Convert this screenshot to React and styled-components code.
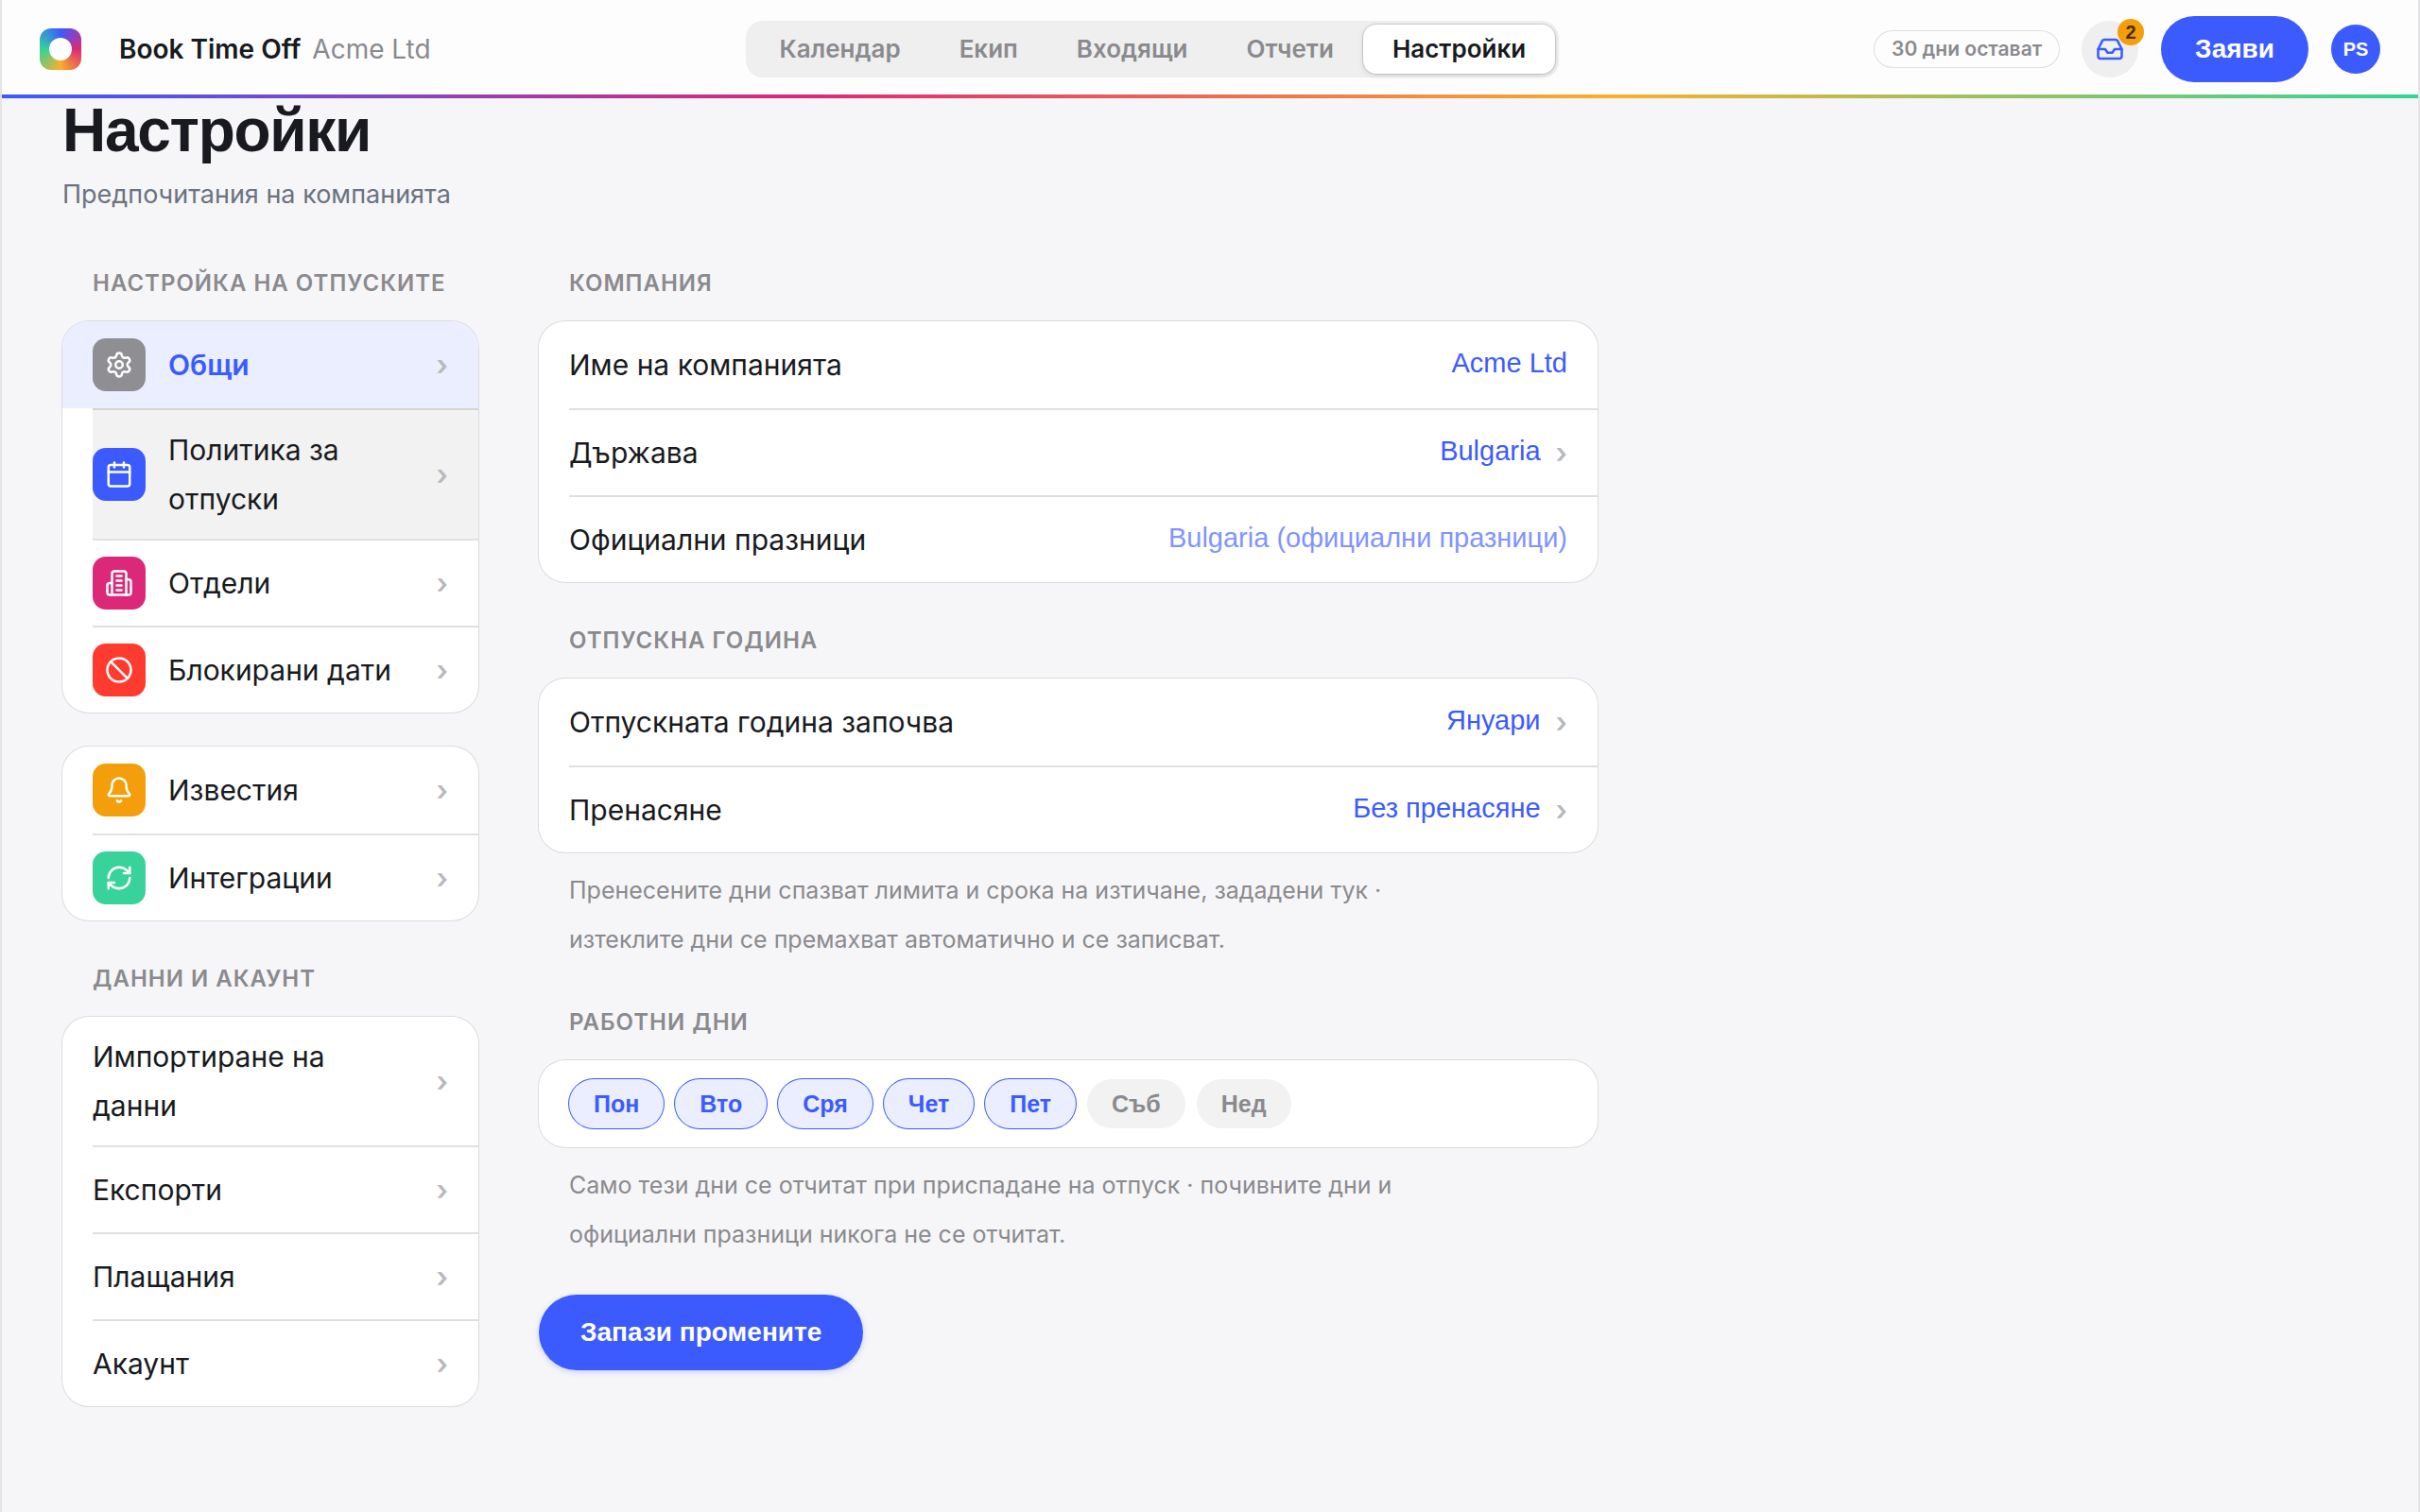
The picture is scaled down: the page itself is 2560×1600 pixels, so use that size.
import React, { useState } from "react";
import styled, { createGlobalStyle, css } from "styled-components";
import { Ban, Bell, Calendar, Inbox, RefreshCw, Settings } from "lucide-react";

const NAV_ITEMS = ["Календар", "Екип", "Входящи", "Отчети", "Настройки"];

const LEAVE_MENU = [
  { label: "Общи", icon: Settings, color: "#8e8e93", active: true },
  { label: "Политика за отпуски", icon: Calendar, color: "#3b5bff", hovered: true },
  { label: "Отдели", icon: BuildingIcon, color: "#dc2878" },
  { label: "Блокирани дати", icon: Ban, color: "#ff3b30" },
];

const APP_MENU = [
  { label: "Известия", icon: Bell, color: "#f59e0b" },
  { label: "Интеграции", icon: RefreshCw, color: "#38d39b" },
];

const DATA_MENU = [
  { label: "Импортиране на данни" },
  { label: "Експорти" },
  { label: "Плащания" },
  { label: "Акаунт" },
];

const WEEK = ["Пон", "Вто", "Сря", "Чет", "Пет", "Съб", "Нед"];

function BuildingIcon({ size = 24, strokeWidth = 2 }) {
  return (
    <svg
      width={size}
      height={size}
      viewBox="0 0 24 24"
      fill="none"
      stroke="currentColor"
      strokeWidth={strokeWidth}
      strokeLinecap="round"
      strokeLinejoin="round"
      aria-hidden="true"
    >
      <path d="M6 22V4a2 2 0 0 1 2-2h8a2 2 0 0 1 2 2v18Z" />
      <path d="M6 12H4a2 2 0 0 0-2 2v6a2 2 0 0 0 2 2h2" />
      <path d="M18 9h2a2 2 0 0 1 2 2v9a2 2 0 0 1-2 2h-2" />
      <path d="M10 6h4" />
      <path d="M10 10h4" />
      <path d="M10 14h4" />
      <path d="M10 18h4" />
    </svg>
  );
}

function Menu({ items }) {
  return (
    <Card>
      {items.map(({ label, icon: Icon, color, active, hovered }) => (
        <MenuLink href="#" key={label} $active={active} $hovered={hovered}>
          {Icon && (
            <IconTile $color={color}>
              <Icon size={30} strokeWidth={2} />
            </IconTile>
          )}
          <MenuLabel>{label}</MenuLabel>
          <Chevron>›</Chevron>
        </MenuLink>
      ))}
    </Card>
  );
}

function SelectRow({ id, label, options }) {
  return (
    <FieldRow>
      <FieldLabel htmlFor={id}>{label}</FieldLabel>
      <FieldSelect id={id}>
        {options.map((option) => (
          <option key={option}>{option}</option>
        ))}
      </FieldSelect>
      <Chevron>›</Chevron>
    </FieldRow>
  );
}

export default function App() {
  const [companyName, setCompanyName] = useState("Acme Ltd");
  const [workDays, setWorkDays] = useState(WEEK.slice(0, 5));

  const toggleDay = (day) => {
    setWorkDays((days) =>
      days.includes(day) ? days.filter((d) => d !== day) : [...days, day]
    );
  };

  return (
    <Shell>
      <GlobalStyle />
      <Header>
        <Brand href="#">
          <Logo />
          <BrandText>
            <BrandName>Book Time Off</BrandName>
            <BrandCompany>Acme Ltd</BrandCompany>
          </BrandText>
        </Brand>
        <Nav>
          {NAV_ITEMS.map((item) => (
            <NavLink href="#" key={item} $active={item === "Настройки"}>
              {item}
            </NavLink>
          ))}
        </Nav>
        <Actions>
          <Balance>30 дни остават</Balance>
          <InboxButton type="button" aria-label="Входящи">
            <Inbox size={30} strokeWidth={2} />
            <Badge>2</Badge>
          </InboxButton>
          <RequestButton type="button">Заяви</RequestButton>
          <Avatar type="button">PS</Avatar>
        </Actions>
      </Header>

      <Main>
        <Title>Настройки</Title>
        <Subtitle>Предпочитания на компанията</Subtitle>

        <Columns>
          <Sidebar>
            <SectionTitle>Настройка на отпуските</SectionTitle>
            <Menu items={LEAVE_MENU} />
            <MenuGap />
            <Menu items={APP_MENU} />
            <SectionTitle $spaced>Данни и акаунт</SectionTitle>
            <Menu items={DATA_MENU} />
          </Sidebar>

          <Form onSubmit={(e) => e.preventDefault()}>
            <SectionTitle>Компания</SectionTitle>
            <Card>
              <FieldRow>
                <FieldLabel htmlFor="company">Име на компанията</FieldLabel>
                <FieldInput
                  id="company"
                  value={companyName}
                  onChange={(e) => setCompanyName(e.target.value)}
                />
              </FieldRow>
              <SelectRow id="country" label="Държава" options={["Bulgaria"]} />
              <FieldRow>
                <FieldLabel htmlFor="holidays">Официални празници</FieldLabel>
                <FieldInput
                  id="holidays"
                  value="Bulgaria (официални празници)"
                  disabled
                  readOnly
                />
              </FieldRow>
            </Card>

            <SectionTitle $spaced>Отпускна година</SectionTitle>
            <Card>
              <SelectRow
                id="year-start"
                label="Отпускната година започва"
                options={["Януари"]}
              />
              <SelectRow
                id="carry-over"
                label="Пренасяне"
                options={["Без пренасяне"]}
              />
            </Card>
            <Note>
              Пренесените дни спазват лимита и срока на изтичане, зададени тук ·
              изтеклите дни се премахват автоматично и се записват.
            </Note>

            <SectionTitle $spaced>Работни дни</SectionTitle>
            <Card>
              <Days>
                {WEEK.map((day) => (
                  <DayChip
                    type="button"
                    key={day}
                    $on={workDays.includes(day)}
                    aria-pressed={workDays.includes(day)}
                    onClick={() => toggleDay(day)}
                  >
                    {day}
                  </DayChip>
                ))}
              </Days>
            </Card>
            <Note>
              Само тези дни се отчитат при приспадане на отпуск · почивните дни и
              официални празници никога не се отчитат.
            </Note>

            <SaveButton type="submit">Запази промените</SaveButton>
          </Form>
        </Columns>
      </Main>
    </Shell>
  );
}

const GlobalStyle = createGlobalStyle`
  * {
    box-sizing: border-box;
  }

  body {
    margin: 0;
    background: #f6f6f8;
    color: #181a20;
    font-family: Inter, "Liberation Sans", sans-serif;
    font-size: 30px;
    line-height: 52px;
  }

  button,
  input,
  select {
    margin: 0;
    padding: 0;
    border: 0;
    background: none;
    font-family: "Liberation Sans", sans-serif;
  }

  a {
    color: inherit;
    text-decoration: none;
  }
`;

const Shell = styled.div`
  min-height: 100vh;
  border: solid #e5e5e7;
  border-width: 0 2px;
`;

const Header = styled.header`
  position: sticky;
  top: 0;
  z-index: 10;
  display: flex;
  align-items: center;
  justify-content: space-between;
  height: 104px;
  padding: 0 40px;
  background: linear-gradient(90deg, #3b5bff, #dc2878, #f8b02c, #34d399) bottom /
      100% 4px no-repeat,
    #fdfdfd;
`;

const Brand = styled.a`
  display: flex;
  align-items: center;
  gap: 40px;
`;

const Logo = styled.span`
  display: flex;
  align-items: center;
  justify-content: center;
  width: 44px;
  height: 44px;
  border-radius: 12px;
  background: conic-gradient(#3b5bff, #dc2878, #f8b02c, #34d399, #3b5bff);

  &::after {
    content: "";
    width: 24px;
    height: 24px;
    border-radius: 50%;
    background: #fff;
  }
`;

const BrandText = styled.span`
  display: flex;
  gap: 12px;
  font-size: 28px;
`;

const BrandName = styled.span`
  font-weight: 600;
`;

const BrandCompany = styled.span`
  color: #8a8a8e;
`;

const Nav = styled.nav`
  display: flex;
  padding: 4px;
  border-radius: 18px;
  background: #efefef;
`;

const NavLink = styled.a`
  padding: 0 31px;
  border-radius: 14px;
  color: #8a8a8e;
  font-size: 26px;
  font-weight: 600;

  ${({ $active }) =>
    $active &&
    css`
      background: #fff;
      color: #181a20;
      box-shadow: 0 0 0 1px rgba(0, 0, 0, 0.12), 0 2px 6px rgba(0, 0, 0, 0.12);
    `}
`;

const Actions = styled.div`
  display: flex;
  align-items: center;
  gap: 24px;
`;

const Balance = styled.span`
  padding: 0 18px;
  border-radius: 20px;
  box-shadow: 0 0 0 1px #dededf;
  color: #8a8a8e;
  font-size: 21px;
  font-weight: 600;
  line-height: 38px;
`;

const InboxButton = styled.button`
  position: relative;
  display: flex;
  align-items: center;
  justify-content: center;
  width: 60px;
  height: 60px;
  border-radius: 50%;
  background: #efefef;
  color: #3b5bff;
`;

const Badge = styled.span`
  position: absolute;
  top: -2px;
  right: -6px;
  min-width: 28px;
  border-radius: 14px;
  background: #f59e0b;
  color: #4a2c00;
  font-size: 20px;
  font-weight: 700;
  line-height: 28px;
`;

const RequestButton = styled.button`
  padding: 0 36px;
  border-radius: 35px;
  background: #3b5bff;
  color: #fff;
  font-size: 28px;
  font-weight: 700;
  line-height: 70px;
`;

const Avatar = styled.button`
  width: 52px;
  height: 52px;
  border-radius: 50%;
  background: #3b5bff;
  color: #fff;
  font-size: 20px;
  font-weight: 700;
`;

const Main = styled.main`
  padding: 0 64px 64px;
`;

const Title = styled.h1`
  margin: 0 0 8px;
  font-family: "Liberation Sans", sans-serif;
  font-size: 64px;
  font-weight: 700;
  letter-spacing: -0.02em;
  line-height: 68px;
`;

const Subtitle = styled.p`
  margin: 0 0 42px;
  color: #6b7280;
  font-size: 27px;
`;

const Columns = styled.div`
  display: grid;
  grid-template-columns: 440px minmax(0, 1120px);
  gap: 64px;
  align-items: start;
`;

const Sidebar = styled.aside`
  display: flex;
  flex-direction: column;
`;

const Form = styled.form`
  display: flex;
  flex-direction: column;
`;

const SectionTitle = styled.h2`
  margin: ${({ $spaced }) => ($spaced ? "36px" : "0")} 0 14px;
  padding: 0 32px;
  color: #8a8a8e;
  font-size: 24px;
  font-weight: 600;
  letter-spacing: 1px;
  text-transform: uppercase;
  white-space: nowrap;
`;

const Card = styled.div`
  overflow: hidden;
  border-radius: 28px;
  background: #fff;
  box-shadow: 0 0 0 1px #dcdcde;
`;

const MenuGap = styled.div`
  height: 36px;
`;

const rowStyles = css`
  display: flex;
  align-items: center;
  min-height: 92px;
  margin-left: 32px;
  padding: 16px 32px 16px 0;

  & + & {
    border-top: 2px solid rgba(0, 0, 0, 0.12);
  }
`;

const MenuLink = styled.a`
  ${rowStyles}
  gap: 24px;

  ${({ $hovered }) =>
    $hovered &&
    css`
      background: #f2f2f2;
    `}

  ${({ $active }) =>
    $active &&
    css`
      margin-left: 0;
      padding-left: 32px;
      background: #eaeeff;
      color: #3b5bff;
      font-weight: 600;
    `}
`;

const IconTile = styled.span`
  display: flex;
  flex: none;
  align-items: center;
  justify-content: center;
  width: 56px;
  height: 56px;
  border-radius: 14px;
  background: ${({ $color }) => $color};
  color: #fff;
`;

const MenuLabel = styled.span`
  flex: 1;
`;

const Chevron = styled.span`
  flex: none;
  color: #b8b8bc;
  font-size: 30px;
  font-weight: 600;
`;

const FieldRow = styled.div`
  ${rowStyles}
`;

const FieldLabel = styled.label`
  flex: none;
`;

const fieldStyles = css`
  padding-bottom: 4px;
  color: #3b5bff;
  font-size: 29px;
  text-align: right;
  outline: none;
`;

const FieldInput = styled.input`
  ${fieldStyles}
  flex: 1;
  min-width: 0;

  &:disabled {
    opacity: 0.65;
  }
`;

const FieldSelect = styled.select`
  ${fieldStyles}
  margin-left: auto;
  margin-right: 16px;
  appearance: none;
  text-align-last: right;
`;

const Note = styled.p`
  max-width: 960px;
  margin: 0;
  padding: 14px 32px 0;
  color: #8a8a8e;
  font-size: 25px;
`;

const Days = styled.div`
  display: flex;
  flex-wrap: wrap;
  gap: 12px;
  padding: 20px 32px;
`;

const DayChip = styled.button`
  padding: 0 26px;
  border-radius: 26px;
  background: #f2f2f2;
  color: #8a8a8e;
  font-size: 25px;
  font-weight: 700;
  line-height: 52px;

  ${({ $on }) =>
    $on &&
    css`
      background: #eaeeff;
      color: #3b5bff;
      box-shadow: 0 0 0 1px #3b5bff;
    `}
`;

const SaveButton = styled.button`
  align-self: flex-start;
  margin-top: 38px;
  padding: 0 44px;
  border-radius: 40px;
  background: #3b5bff;
  box-shadow: 0 2px 6px rgba(59, 91, 255, 0.25);
  color: #fff;
  font-size: 28px;
  font-weight: 700;
  line-height: 80px;
`;
